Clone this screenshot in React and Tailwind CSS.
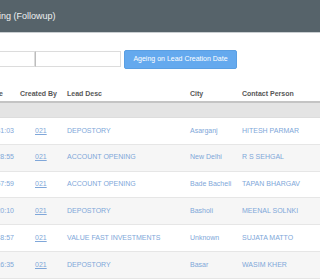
import React from "react";

const rows = [
  { time: "12:41:03", by: "021", desc: "DEPOSTORY", city: "Asarganj", contact: "HITESH PARMAR" },
  { time: "11:28:55", by: "021", desc: "ACCOUNT OPENING", city: "New Delhi", contact: "R S SEHGAL" },
  { time: "10:57:59", by: "021", desc: "ACCOUNT OPENING", city: "Bade Bacheli", contact: "TAPAN BHARGAV" },
  { time: "10:20:10", by: "021", desc: "DEPOSTORY", city: "Basholi", contact: "MEENAL SOLNKI" },
  { time: "09:48:57", by: "021", desc: "VALUE FAST INVESTMENTS", city: "Unknown", contact: "SUJATA MATTO" },
  { time: "09:16:35", by: "021", desc: "DEPOSTORY", city: "Basar", contact: "WASIM KHER" },
];

const cols = "grid grid-cols-[20px_47px_123px_52px_1fr]";

export default function App() {
  return (
    <div className="h-[280px] w-[320px] overflow-hidden bg-white font-['Liberation_Sans',Arial,sans-serif]">
      <div className="flex h-[33px] items-center overflow-hidden border-b border-[#c9ced1] bg-[#56636a] pt-[2px]">
        <span className="ml-[-34px] whitespace-nowrap text-[9px] text-[#eef1f2]">Lead Aging (Followup)</span>
      </div>

      <div className="mt-[16px] flex h-[20px] items-center">
        <div className="h-[16px] w-[35px] border border-l-0 border-[#dcdcdc] bg-white" />
        <div className="h-[16px] w-[86px] border border-l-[#bdbdbd] border-[#dcdcdc] bg-white" />
        <button
          type="button"
          className="ml-[3px] h-[19px] w-[113px] rounded-[2px] border border-[#5a9fe3] bg-[#64a9ee] text-[7px] text-white"
        >
          Ageing on Lead Creation Date
        </button>
      </div>

      <div className="mt-[19px]">
        <div className={`${cols} h-[15px] items-center border-b-2 border-[#c4c4c4] text-[7px] font-bold text-[#575757]`}>
          <div className="flex justify-end overflow-visible pr-[17px] whitespace-nowrap">Date</div>
          <div>Created By</div>
          <div>Lead Desc</div>
          <div>City</div>
          <div>Contact Person</div>
        </div>
        <div className="h-[15px] border-b border-[#dddddd] bg-[#e4e4e4]" />
        {rows.map((r, i) => (
          <div
            key={i}
            className={`${cols} h-[26.8px] items-center border-b border-[#e6e6e6] text-[7px] text-[#80a7d9] ${i % 2 ? "bg-[#f6f6f6]" : "bg-white"}`}
          >
            <div className="flex justify-end pr-[6px] whitespace-nowrap">{r.time}</div>
            <div className="pl-[15px] underline">{r.by}</div>
            <div className="whitespace-nowrap">{r.desc}</div>
            <div className="whitespace-nowrap">{r.city}</div>
            <div className="whitespace-nowrap">{r.contact}</div>
          </div>
        ))}
      </div>
    </div>
  );
}
